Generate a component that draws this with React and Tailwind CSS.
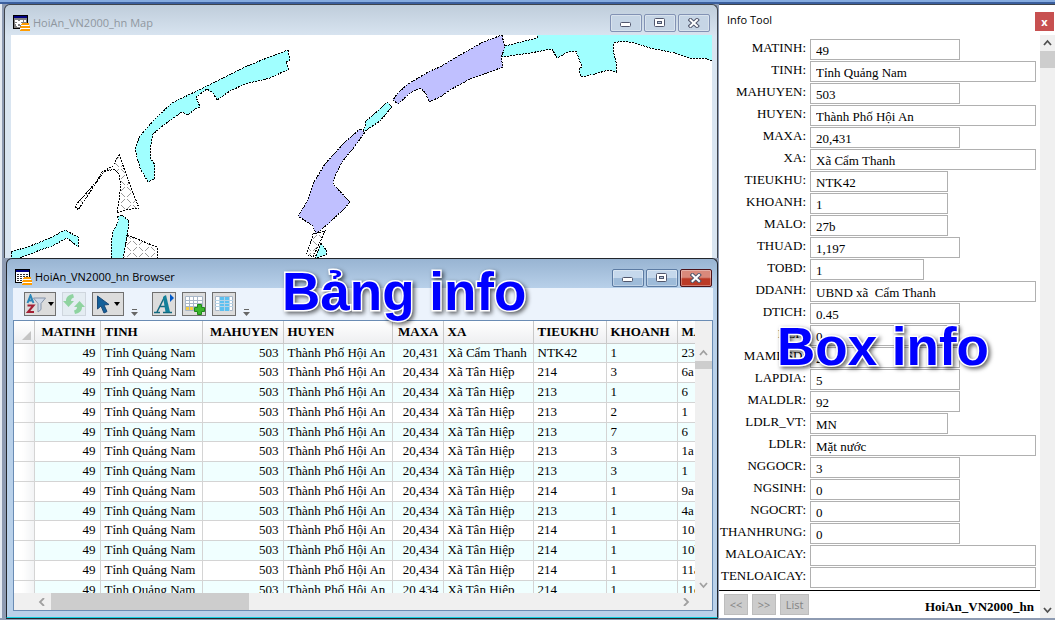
import React from 'react';

const columns = [
  { name: 'MATINH', width: 'w-[66px]', right: true },
  { name: 'TINH', width: 'w-[102px]' },
  { name: 'MAHUYEN', width: 'w-[81px]', right: true },
  { name: 'HUYEN', width: 'w-[109px]' },
  { name: 'MAXA', width: 'w-[51px]', right: true },
  { name: 'XA', width: 'w-[90px]' },
  { name: 'TIEUKHU', width: 'w-[73px]' },
  { name: 'KHOANH', width: 'w-[71px]' },
  { name: 'MALO', width: 'w-[60px]' },
];

const place = ['49', 'Tỉnh Quảng Nam', '503', 'Thành Phố Hội An'];
const rows = [
  [...place, '20,431', 'Xã Cẩm Thanh', 'NTK42', '1', '23'],
  [...place, '20,434', 'Xã Tân Hiệp', '214', '3', '6a'],
  [...place, '20,434', 'Xã Tân Hiệp', '213', '1', '6'],
  [...place, '20,434', 'Xã Tân Hiệp', '213', '2', '1'],
  [...place, '20,434', 'Xã Tân Hiệp', '213', '7', '6'],
  [...place, '20,434', 'Xã Tân Hiệp', '213', '3', '1a'],
  [...place, '20,434', 'Xã Tân Hiệp', '213', '3', '1'],
  [...place, '20,434', 'Xã Tân Hiệp', '214', '1', '9a'],
  [...place, '20,434', 'Xã Tân Hiệp', '213', '1', '4a'],
  [...place, '20,434', 'Xã Tân Hiệp', '214', '1', '10a'],
  [...place, '20,434', 'Xã Tân Hiệp', '214', '1', '10b'],
  [...place, '20,434', 'Xã Tân Hiệp', '214', '1', '11a'],
  [...place, '20,434', 'Xã Tân Hiệp', '214', '1', '11c'],
];

const FULL = 'w-[226px]';
const LONG = 'w-[150px]';
const MEDIUM = 'w-[138px]';
const SHORT = 'w-[114px]';

const fields = [
  ['MATINH', '49', LONG],
  ['TINH', 'Tỉnh Quảng Nam', FULL],
  ['MAHUYEN', '503', LONG],
  ['HUYEN', 'Thành Phố Hội An', FULL],
  ['MAXA', '20,431', LONG],
  ['XA', 'Xã Cẩm Thanh', FULL],
  ['TIEUKHU', 'NTK42', MEDIUM],
  ['KHOANH', '1', MEDIUM],
  ['MALO', '27b', MEDIUM],
  ['THUAD', '1,197', LONG],
  ['TOBD', '1', SHORT],
  ['DDANH', 'UBND xã  Cẩm Thanh', FULL],
  ['DTICH', '0.45', LONG],
  ['NEP', '0', LONG],
  ['MAMDSD', '2', LONG],
  ['LAPDIA', '5', LONG],
  ['MALDLR', '92', LONG],
  ['LDLR_VT', 'MN', MEDIUM],
  ['LDLR', 'Mặt nước', FULL],
  ['NGGOCR', '3', LONG],
  ['NGSINH', '0', LONG],
  ['NGOCRT', '0', LONG],
  ['THANHRUNG', '0', LONG],
  ['MALOAICAY', '', FULL],
  ['TENLOAICAY', '', FULL],
];

const WindowIcon = ({ map }) => (
  <svg width="17" height="17" viewBox="0 0 17 17" shapeRendering="crispEdges">
    <rect x="0.5" y="0.5" width="14" height="13" fill={map ? '#808080' : '#fff'} stroke="#000" />
    <rect x="1" y="1" width="13" height="2" fill="#000080" />
    {map ? (
      <path d="M2 5h3v1h2V5h3v2H8v1h1v2H7V9H5v2H3V9H2V8h2V7H2zM11 5h2v2h-2zM4 11h3v1H4z" fill="#fff" />
    ) : (
      <path d="M2 5.500h2m1 0h2m1 0h2m1 0h2M2 7.500h2m1 0h2m1 0h2m1 0h2M2 9.500h2m1 0h2m1 0h2m1 0h2M2 11.500h2m1 0h2m1 0h2" stroke="#333" />
    )}
    <path d="M9 8h7v2H8zM8 11h9v2H7zM8 14h9v2H7z" fill="#ff9c00" />
    <path d="M8 10h8v1H8zM7 13h10v1H7z" fill="#fff" />
  </svg>
);

const WindowButtons = ({ active }) => {
  const box = active
    ? 'border-[#5c7ba3] bg-linear-to-b from-[#c5d8ec] from-50% to-[#9ebbd9] to-50%'
    : 'border-[#8292b4] bg-[#c6d5e5]';
  const close = active
    ? 'border-[#4c1218] bg-linear-to-b from-[#d9897b] from-45% to-[#bb3a26] to-55%'
    : box;
  return (
    <div className="flex gap-[2px]">
      <button aria-label="Minimize" className={`w-8 h-[18px] border rounded-[2px] shadow-[inset_0_0_0_1px_#ffffff55] flex items-center justify-center ${box}`}>
        <svg width="12" height="6" viewBox="0 0 12 6" className="mt-1"><rect x="0.5" y="0.5" width="10" height="4" rx="1" fill="#fff" stroke="#50566c" /></svg>
      </button>
      <button aria-label="Maximize" className={`w-8 h-[18px] border rounded-[2px] shadow-[inset_0_0_0_1px_#ffffff55] flex items-center justify-center ${box}`}>
        <svg width="12" height="10" viewBox="0 0 12 10"><rect x="0.5" y="0.5" width="10" height="8" rx="1" fill="#fff" stroke="#50566c" /><rect x="3.5" y="3.5" width="4" height="2" fill="#b9cbe0" stroke="#50566c" /></svg>
      </button>
      <button aria-label="Close" className={`w-8 h-[18px] border rounded-[2px] shadow-[inset_0_0_0_1px_#ffffff55] flex items-center justify-center ${close}`}>
        <svg width="12" height="10" viewBox="0 0 12 10">
          <path d="M2.500 2l6.500 6M9 2l-6.500 6" stroke="#50566c" strokeWidth="4" strokeLinecap="square" />
          <path d="M2.500 2l6.500 6M9 2l-6.500 6" stroke="#fff" strokeWidth="2" strokeLinecap="square" />
        </svg>
      </button>
    </div>
  );
};

const MapView = () => (
  <svg className="block h-[223px] w-full bg-white" viewBox="11 35 701 223" preserveAspectRatio="xMinYMin slice" shapeRendering="crispEdges">
    <defs>
      <pattern id="marsh" width="12" height="12" patternUnits="userSpaceOnUse">
        <path d="M1 1l4 4M11 1l-4 4M7 7l4 4M5 7l-4 4" stroke="#999" fill="none" />
      </pattern>
    </defs>
    <g stroke="#000" strokeDasharray="2 1">
      <g fill="#a0ffff">
        <path d="M288 50L290 60L286 62L289 69L270 78L245 84L230 91L217 100L213 93L207 89L196 97L200 107L195 109L188 115L182 112L165 124L153 134L150 150L151 159L155 165L154 179L148 182L140 168L135 149L140 136L155 119L172 103L205 87L245 67L262 60Z" />
        <path d="M11 252L30 246L48 239L65 230L78 237V247L67 238L52 246L40 250L20 258H11Z" />
        <path d="M117 217L122 215L129 221L127 237L123 259H111V245L113 232L119 220Z" />
        <path d="M387 102L392 107L380 121L365 131L363 130L366 126L365 122L380 109Z" />
        <path d="M505 46L537 38V30H720V62L712 61L705 58L690 58L675 53L650 48L635 43L622 41L614 43L613 50L616 62L616 72L608 70L595 74L581 77L579 69L582 67L576 51L568 52L557 58L552 49L530 53L502 57V51Z" />
        <path d="M321 243L326 250V255L315 258Z" />
      </g>
      <g fill="#c0c0ff">
        <path d="M502 35L505 48L501 57L503 67L470 79L450 90L440 97L429 102L426 94L421 88L410 93L398 104L393 100L397 94L408 84L430 71L440 67L460 55L483 42Z" />
        <path d="M360 129L365 132L355 146L342 162L335 176L333 184L350 202L344 209L328 224L316 234L313 226L298 216L308 200L314 182L325 164L345 142Z" />
      </g>
      <g fill="url(#marsh)">
        <path d="M119 154L128 180L139 208L126 210L117 213L119 200L121 185L119 174L114 169L104 172L98 180L78 210L75 206L96 182L102 172L113 166Z" />
        <path d="M127 235L157 247V259H123Z" />
        <path d="M313 234L325 231L319 244L313 257L306 254L310 245Z" />
      </g>
    </g>
  </svg>
);

const Caret = () => (
  <svg width="6" height="4" viewBox="0 0 6 4"><path d="M0 0h6L3 4z" fill="#000" /></svg>
);

const Overflow = () => (
  <svg width="7" height="7" viewBox="0 0 7 7" aria-hidden="true"><path d="M1 0h5v1H1zM0 3h7L3.500 7z" fill="#666" /></svg>
);

const TOOL = 'h-6 border border-[#707070] bg-[#dcdcdc] flex items-center justify-center';

const Toolbar = () => (
  <div className="h-8 shrink-0 bg-[#ecf3fc] flex items-center pl-[11px]">
    <button aria-label="Sort and filter" className={`${TOOL} w-8 gap-px`}>
      <svg width="21" height="20" viewBox="0 0 21 20">
        <path d="M1.500 9L4.500 1.500L7.500 9M2.500 6.500h4" fill="none" stroke="#2a86b8" strokeWidth="2" />
        <path d="M1.500 11.500h6L2 18h6" fill="none" stroke="#a32035" strokeWidth="2" />
        <path d="M7.500 4h12l-4.500 5.500v6l-3 2.500V9.500z" fill="#cfd9e8" stroke="#8593a8" />
      </svg>
      <Caret />
    </button>
    <button aria-label="Refresh" className="h-6 w-6 ml-[6px] border border-[#cfd6de] bg-[#e4ecf2] flex items-center justify-center">
      <svg width="22" height="20" viewBox="0 0 22 20" fill="#8fd3a0">
        <path d="M10 0C5 1 3 3.500 3 7H0l5.500 6L11 7H8c0-2 1-3 3-3.500z" />
        <path d="M12 20c5-1 7-3.500 7-7h3l-5.500-6L11 13h3c0 2-1 3-3 3.500z" />
      </svg>
    </button>
    <button aria-label="Select" className={`${TOOL} w-8 ml-[6px] gap-1`}>
      <svg width="14" height="19" viewBox="0 0 14 19"><path d="M1.500 1v13l3.500-3 3 7 3-1.500-3-6.500 5-.5z" fill="#14609a" stroke="#1c4a78" /></svg>
      <Caret />
    </button>
    <div className="w-5 mr-2 h-6 flex justify-center items-end"><Overflow /></div>
    <button aria-label="Font" className={`${TOOL} w-6`}>
      <svg width="22" height="22" viewBox="0 0 22 22">
        <path d="M1 19.500h6M10 19.500h9M4 19L12 3M6.500 13.500h8" fill="none" stroke="#12687f" strokeWidth="1.500" />
        <path d="M10 4l3-2 4 17h-4.500z" fill="#12809a" />
        <path d="M17 1v8l4-4z" fill="#0058c8" />
      </svg>
    </button>
    <button aria-label="Add row" className={`${TOOL} w-6 ml-[6px]`}>
      <svg width="22" height="22" viewBox="0 0 22 22">
        <path d="M2.500 3.500h17v14h-17z" fill="#fff" stroke="#a9b7c8" />
        <path d="M3 14h8v3H3z" fill="#f5cf45" />
        <path d="M2.500 7.500h17M2.500 10.500h17M2.500 13.500h17M6.500 4v13M10.500 4v13M14.500 4v13" stroke="#a9b7c8" />
        <path d="M14.500 11.500h4v3h3v4h-3v3h-4v-3h-3v-4h3z" fill="#3bb52c" stroke="#1e8a18" />
      </svg>
    </button>
    <button aria-label="Pick columns" className={`${TOOL} w-6 ml-[6px]`}>
      <svg width="20" height="18" viewBox="0 0 20 18">
        <path d="M1.500 1.500h17v14h-17z" fill="#fff" stroke="#a9b7c8" />
        <path d="M6 2h4v14H6zM11 2h4v14h-4z" fill="#5cc0f0" />
        <path d="M1 5.500h18M1 8.500h18M1 11.500h18M5.500 2v14M10.500 2v14M15.500 2v14" stroke="#b6d3e6" />
      </svg>
    </button>
    <div className="w-5 h-6 flex justify-center items-end"><Overflow /></div>
  </div>
);

const chevrons = {
  up: 'M1 6l3.500-4L8 6',
  down: 'M1 2l3.500 4L8 2',
  left: 'M6 0L2 4l4 4',
  right: 'M2 0l4 4-4 4',
};

const Chevron = ({ dir, color = '#a0a0a0' }) => (
  <svg width="9" height="8" viewBox="0 0 9 8"><path d={chevrons[dir]} fill="none" stroke={color} strokeWidth="1.8" /></svg>
);

const DataTable = () => (
  <table className="table-fixed border-collapse w-[723px] text-[13px] leading-[18px]">
    <thead>
      <tr className="h-[22px] bg-linear-to-b from-white to-[#eeeff1]">
        <th className="w-5 border-r border-b border-[#c9c9c9] p-0 align-bottom">
          <svg width="9" height="9" viewBox="0 0 9 9" className="ml-2 mb-[3px]"><path d="M9 0v9H0z" fill="#c4c4c4" /></svg>
        </th>
        {columns.map((c) => (
          <th key={c.name} className={`${c.width} border-r border-b border-[#c9c9c9] p-0 px-1 overflow-hidden whitespace-nowrap font-bold ${c.right ? 'text-right' : 'text-left'}`}>
            {c.name}
          </th>
        ))}
      </tr>
    </thead>
    <tbody>
      {rows.map((row, i) => (
        <tr key={i} className="h-5 nth-[4n+1]:h-[19px] odd:bg-[#f0ffff] even:bg-white">
          <td className="border-r border-b border-[#d4d4d4] bg-linear-to-r from-white from-40% to-[#f2f3f5] p-0"></td>
          {row.map((value, j) => (
            <td key={j} className={`border-r border-b border-[#d4d4d4] p-0 px-1 overflow-hidden whitespace-nowrap ${columns[j].right ? 'text-right' : 'text-left'}`}>
              {value}
            </td>
          ))}
        </tr>
      ))}
    </tbody>
  </table>
);

const Caption = ({ className, children }) => (
  <p className={`absolute z-10 whitespace-nowrap pointer-events-none font-['Liberation_Sans',sans-serif] font-bold text-[53px] leading-[60px] text-[#0000ff] [-webkit-text-stroke:3px_#ffffff] [paint-order:stroke_fill] drop-shadow-[2px_2px_2px_#00000099] ${className}`}>
    {children}
  </p>
);

const MapWindow = () => (
  <section className="rounded-t-md border border-b-0 border-[#3f444c] bg-linear-to-b from-[#bfcddb] to-[#d9e5f1] to-[32px] pl-[6px] pr-[5px]">
    <header className="h-[30px] flex items-center justify-between pt-[6px] px-[2px]">
      <div className="flex items-center gap-[3px] text-[#8f979f] text-[11px]">
        <WindowIcon map />
        <h2>HoiAn_VN2000_hn Map</h2>
      </div>
      <WindowButtons />
    </header>
    <MapView />
  </section>
);

const BrowserWindow = () => (
  <section className="relative flex-1 min-h-0 flex flex-col ml-[2px] rounded-t-md border border-[#22262c] border-b-[#12d0e0] shadow-[0_1px_0_#22262c] bg-linear-to-b from-[#98b4d2] to-[#b9d1ea] to-[30px] pl-[6px] pr-1 pb-[6px]">
    <header className="h-[29px] shrink-0 flex items-center justify-between pt-2 pl-[2px] pr-px">
      <div className="flex items-center gap-[3px] text-black text-[11px]">
        <WindowIcon />
        <h2>HoiAn_VN2000_hn Browser</h2>
      </div>
      <WindowButtons active />
    </header>
    <Toolbar />
    <div className="flex-1 min-h-0 flex flex-col border border-[#6a8cb4] bg-[#f0f0f0] font-['Liberation_Serif',serif] text-black">
      <div className="flex-1 min-h-0 flex">
        <div className="flex-1 min-w-0 overflow-hidden"><DataTable /></div>
        <div className="w-[17px] shrink-0 flex flex-col items-center pt-7 pb-1">
          <Chevron dir="up" />
          <div className="mt-1 w-full h-2 bg-[#cdcdcd]"></div>
          <div className="mt-auto"><Chevron dir="down" /></div>
        </div>
      </div>
      <div className="h-[17px] shrink-0 flex items-center pl-6 pr-[21px]">
        <Chevron dir="left" />
        <div className="ml-1 w-[198px] h-full bg-[#cdcdcd]"></div>
        <div className="ml-auto"><Chevron dir="right" /></div>
      </div>
    </div>
    <Caption className="left-[275px] top-[3px]">Bảng info</Caption>
  </section>
);

const NAV = 'h-[21px] border border-[#bdbdbd] bg-[#cccccc] text-[#838383] text-[11px] leading-none';

const InfoPanel = () => (
  <aside className="relative w-[336px] shrink-0 border-t border-[#3f444c] bg-white flex flex-col text-black">
    <header className="h-[30px] shrink-0 flex items-start justify-between pl-2 pr-px pt-[7px]">
      <h2 className="text-[11px] leading-4">Info Tool</h2>
      <button aria-label="Close" className="size-[19px] bg-[#c75050] text-white text-[11px] font-bold leading-4">x</button>
    </header>
    <div className="flex-1 min-h-0 flex">
      <div className="flex-1 min-w-0 flex flex-col">
        <form className="flex-1 flex flex-col gap-px pt-1 font-['Liberation_Serif',serif] text-[13px]">
          {fields.map(([name, value, width]) => (
            <div key={name} className="flex">
              <label htmlFor={name} className="w-[91px] shrink-0 pr-1 flex justify-end leading-[18px]">{name}:</label>
              <input id={name} defaultValue={value} className={`${width} h-[21px] border border-[#b0b0b0] bg-white px-[5px] pt-[2px] outline-none`} />
            </div>
          ))}
        </form>
        <footer className="h-7 shrink-0 border-t border-black flex items-center pl-[5px] pr-[6px]">
          <div className="flex gap-1">
            <button className={`${NAV} w-6`}>&lt;&lt;</button>
            <button className={`${NAV} w-6`}>&gt;&gt;</button>
            <button className={`${NAV} w-[29px]`}>List</button>
          </div>
          <strong className="ml-auto pt-1 font-['Liberation_Serif',serif] text-[13px]">HoiAn_VN2000_hn</strong>
        </footer>
      </div>
      <div className="w-[15px] shrink-0 bg-[#f0f0f0] flex flex-col items-center pt-1 pb-1">
        <Chevron dir="up" color="#505050" />
        <div className="mt-1 w-full h-[17px] bg-[#cdcdcd]"></div>
        <div className="mt-auto"><Chevron dir="down" color="#505050" /></div>
      </div>
    </div>
    <Caption className="left-[58px] top-[312px]">Box info</Caption>
  </aside>
);

export default function App() {
  return (
    <div className="h-screen min-w-[1000px] overflow-hidden flex flex-col bg-[#8e9bb2] font-['Open_Sans','Noto_Sans',sans-serif]">
      <div className="h-1 shrink-0 bg-[#85abe0] border-b-2 border-[#3b5f9e]"></div>
      <main className="flex-1 min-h-0 flex pb-[2px]">
        <div className="flex-1 min-w-0 flex flex-col border-l-2 border-[#e4eaf2] pl-[2px] pr-px">
          <MapWindow />
          <BrowserWindow />
        </div>
        <InfoPanel />
      </main>
    </div>
  );
}
